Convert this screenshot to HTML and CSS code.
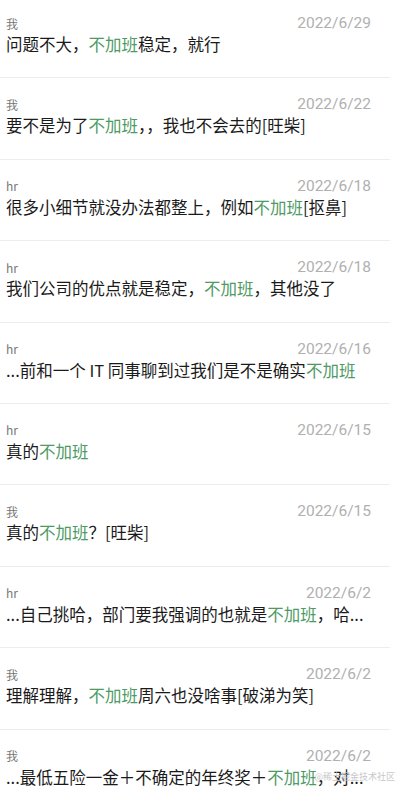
FILE: index.html
```html
<!DOCTYPE html>
<html>
    <head>
        <title>聊天记录搜索</title>
        <meta charset="UTF-8">
        <link rel="stylesheet" href="styles.css">
    </head>
    <body>
        <div class="lista">
            <div class="item">
                <div class="topo"><span class="nome">我</span><span class="data">2022/6/29</span></div>
                <div class="texto">问题不大，<span class="verde">不加班</span>稳定，就行</div>
            </div>
            <div class="item">
                <div class="topo"><span class="nome">我</span><span class="data">2022/6/22</span></div>
                <div class="texto">要不是为了<span class="verde">不加班</span>，，我也不会去的[旺柴]</div>
            </div>
            <div class="item">
                <div class="topo"><span class="nome">hr</span><span class="data">2022/6/18</span></div>
                <div class="texto">很多小细节就没办法都整上，例如<span class="verde">不加班</span>[抠鼻]</div>
            </div>
            <div class="item">
                <div class="topo"><span class="nome">hr</span><span class="data">2022/6/18</span></div>
                <div class="texto">我们公司的优点就是稳定，<span class="verde">不加班</span>，其他没了</div>
            </div>
            <div class="item">
                <div class="topo"><span class="nome">hr</span><span class="data">2022/6/16</span></div>
                <div class="texto">...前和一个 IT 同事聊到过我们是不是确实<span class="verde">不加班</span></div>
            </div>
            <div class="item">
                <div class="topo"><span class="nome">hr</span><span class="data">2022/6/15</span></div>
                <div class="texto">真的<span class="verde">不加班</span></div>
            </div>
            <div class="item">
                <div class="topo"><span class="nome">我</span><span class="data">2022/6/15</span></div>
                <div class="texto">真的<span class="verde">不加班</span>？[旺柴]</div>
            </div>
            <div class="item">
                <div class="topo"><span class="nome">hr</span><span class="data">2022/6/2</span></div>
                <div class="texto">...自己挑哈，部门要我强调的也就是<span class="verde">不加班</span>，哈...</div>
            </div>
            <div class="item">
                <div class="topo"><span class="nome">我</span><span class="data">2022/6/2</span></div>
                <div class="texto">理解理解，<span class="verde">不加班</span>周六也没啥事[破涕为笑]</div>
            </div>
            <div class="item">
                <div class="topo"><span class="nome">我</span><span class="data">2022/6/2</span></div>
                <div class="texto">...最低五险一金＋不确定的年终奖＋<span class="verde">不加班</span>，对...</div>
            </div>
        </div>
        <!-- marca d'agua -->
        <div class="marca">@稀土掘金技术社区</div>
    </body>
</html>
```

FILE: styles.css
```css
* {
    margin: 0;
    padding: 0;
    box-sizing: border-box;
    font-family: "Noto Sans CJK SC", "Noto Sans", sans-serif;
}
body {
    background-color: #ffffff;
    position: relative;
    height: 796px;
    overflow: hidden;
}
.lista {
    width: 390px;
    margin-top: -3px;
}
.item {
    height: 81.4px;
    padding: 16px 19px 0 6px;
    border-bottom: 1px solid #ededed;
}
.topo {
    display: flex;
    justify-content: space-between;
    align-items: center;
    height: 20px;
}
.nome {
    font-size: 12px;
    color: #777777;
}
.data {
    font-family: Roboto, sans-serif;
    font-size: 15.5px;
    color: #b0b0b0;
}
.texto {
    margin-top: -1px;
    font-size: 16.5px;
    line-height: 24px;
    color: #1a1a1a;
    white-space: nowrap;
}
.verde {
    color: #4e9a64;
}
.marca {
    position: absolute;
    right: 13px;
    bottom: 13px;
    font-size: 9px;
    color: #c8c8c8;
}
```
